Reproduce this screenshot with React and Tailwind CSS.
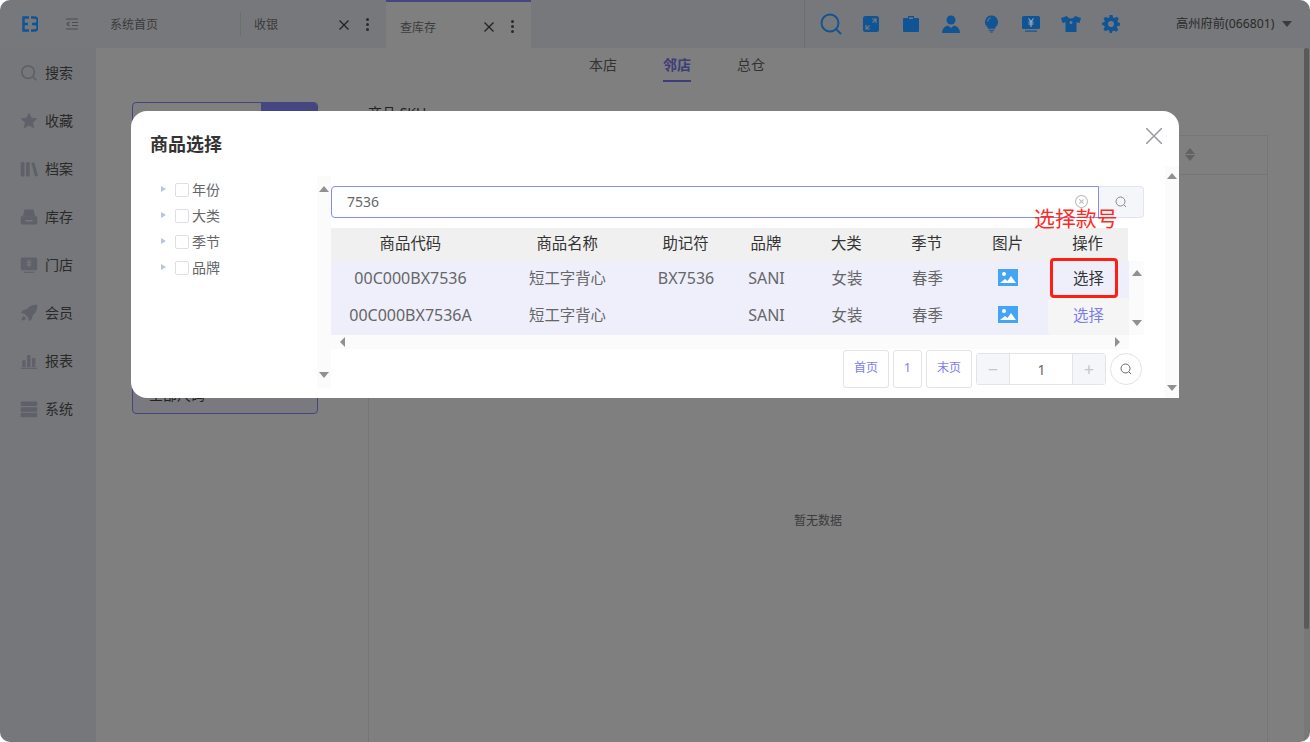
function Si({ children, vb = "0 0 24 24", c = "w-[18px] h-[18px]" }) {
  return <svg viewBox={vb} className={c} fill="currentColor">{children}</svg>;
}
const sideIcons = [
  <svg viewBox="0 0 20 20" className="w-[18px] h-[18px]" fill="none" stroke="currentColor" strokeWidth="2"><circle cx="9" cy="9" r="7" /><path d="M14 14l4 4" /></svg>,
  <Si><path d="M12 .5l3.400 7.200 7.800 1-5.700 5.400 1.500 7.900L12 18l-7 4 1.500-7.900L.800 8.700l7.800-1z" /></Si>,
  <Si><rect x="1" y="3" width="5" height="19" rx="1" /><rect x="8" y="3" width="5" height="19" rx="1" /><path d="M15 4l4-1 5 18-4 1z" /></Si>,
  <Si><path d="M6 2h12l2 9H4z" /><path fillRule="evenodd" d="M2 11h20a1 1 0 011 1v8a2 2 0 01-2 2H3a2 2 0 01-2-2v-8a1 1 0 011-1zm5 5v2h10v-2z" /></Si>,
  <Si><path fillRule="evenodd" d="M3 2h18a2 2 0 012 2v13a2 2 0 01-2 2H3a2 2 0 01-2-2V4a2 2 0 012-2zm6 3l2 3H9v1.500h2.300V11H9v1.500h2.300V15h1.400v-2.500H15V11h-2.300V9.500H15V8h-2l2-3h-1.500L12 7.500 10.500 5z" /><rect x="5" y="21" width="14" height="1.500" /></Si>,
  <Si><path d="M23 1c-6-.5-10.500 1.500-14 6L4 8l-3 4 5 1 5 5 1 5 4-3 1-5c4.500-3.500 6.500-8 6-14z" /><path d="M5 16c-2 1-3 3.500-3 6 2.500 0 5-1 6-3z" /></Si>,
  <Si><rect x="3" y="11" width="4.500" height="9" /><rect x="9.500" y="4" width="4.500" height="16" /><rect x="16" y="8" width="4.500" height="12" /><rect x="1" y="21" width="22" height="1.500" /></Si>,
  <Si><rect x="1" y="2" width="22" height="6" rx="1" /><rect x="1" y="9.500" width="22" height="6" rx="1" /><rect x="1" y="17" width="22" height="6" rx="1" /></Si>,
];
const sideLabels = ["搜索", "收藏", "档案", "库存", "门店", "会员", "报表", "系统"];
const topIcons = [
  <svg viewBox="0 0 22 22" className="w-[22px] h-[22px]" fill="none" stroke="currentColor" strokeWidth="1.900"><circle cx="10" cy="10" r="8.500" /><path d="M16 16l5 5" /></svg>,
  <svg viewBox="0 0 16 16" className="w-[16px] h-[16px]"><rect width="16" height="16" rx="2.500" fill="currentColor" /><path d="M9 3h4v4M13 3L9.500 6.500M7 13H3V9M3 13l3.500-3.500" fill="none" stroke="#77787b" strokeWidth="1.200" /></svg>,
  <svg viewBox="0 0 16 16" className="w-[16px] h-[16px]" fill="currentColor"><path fillRule="evenodd" d="M5 0h6v2h4a1 1 0 011 1v12a1 1 0 01-1 1H1a1 1 0 01-1-1V3a1 1 0 011-1h4zm1 1.500v1.500h4V1.500z" /></svg>,
  <svg viewBox="0 0 18 18" className="w-[18px] h-[18px]" fill="currentColor"><circle cx="9" cy="5" r="4.500" /><path d="M0 18c.3-4 2-6.500 6-7.500L9 13l3-2.500c4 1 5.700 3.500 6 7.500z" /></svg>,
  <svg viewBox="0 0 16 18" className="w-[15px] h-[18px]" fill="currentColor"><path fillRule="evenodd" d="M8 0a7 7 0 014 12.700V14H4v-1.300A7 7 0 018 0zM4.500 6.500A3.500 3.500 0 017.500 3V2A4.500 4.500 0 003.500 6.500z" /><path d="M5 15h6v1.200H5zM6.500 17h3v1h-3z" /></svg>,
  <svg viewBox="0 0 18 16" className="w-[18px] h-[16px]"><rect width="18" height="13" rx="1.500" fill="currentColor" /><rect x="3" y="14.500" width="12" height="1.200" fill="currentColor" /><path d="M6.500 2.500L9 5.500l2.500-3M6.500 6h5M6.500 8h5M9 5.500V11" fill="none" stroke="#a8adb8" strokeWidth="1.100" /></svg>,
  <svg viewBox="0 0 20 16" className="w-[20px] h-[16px]" fill="currentColor"><path fillRule="evenodd" d="M6 0c.5 1.600 2 2.500 4 2.500S13.500 1.600 14 0l6 2-1.500 5-3-.8V16h-11V6.200l-3 .8L0 2zM10 5a1.500 1.500 0 100 3 1.500 1.500 0 000-3z" /></svg>,
  <svg viewBox="0 0 24 24" className="w-[18px] h-[18px]" fill="currentColor"><path fillRule="evenodd" d="M10 0h4l.7 3.300 2 .8L19.600 2.300l2.800 2.800-1.800 2.900.8 2L24 10.700v3.300l-3.300.7-.8 2 1.800 2.900-2.800 2.800-2.900-1.800-2 .8L13.300 24h-3l-.7-3.300-2-.8-2.900 1.800-2.800-2.800 1.800-2.900-.8-2L0 13.300v-3l3-.6.800-2L2 5.100l2.800-2.800 2.900 1.800 2-.8zM12 8a4 4 0 100 8 4 4 0 000-8z" /></svg>,
];
function Arrow({ d, c = "" }) {
  const m = { u: "border-x-[5px] border-x-transparent border-b-[6px] border-b-[#909090]", n: "border-x-[5px] border-x-transparent border-t-[6px] border-t-[#909090]", l: "border-y-[5px] border-y-transparent border-r-[5px] border-r-[#909090]", r: "border-y-[5px] border-y-transparent border-l-[5px] border-l-[#909090]" };
  return <span className={`block w-0 h-0 ${m[d]} ${c}`} />;
}
function Lens({ c = "w-[12px] h-[12px] text-[#888]" }) {
  return <svg viewBox="0 0 12 12" className={c} fill="none" stroke="currentColor" strokeWidth="1"><circle cx="5.500" cy="5.500" r="4.500" /><path d="M9 9l2 2" /></svg>;
}
function Pic() {
  return <svg viewBox="0 0 20 17" className="w-[20px] h-[17px] block"><rect width="20" height="17" fill="#45a5f5" /><circle cx="6" cy="5" r="2" fill="#fff" /><path d="M2 14l5-4 2.500 2L13 7l5 7z" fill="#fff" /></svg>;
}
function X() {
  return <svg viewBox="0 0 10 10" className="w-[10px] h-[10px] block" fill="none" stroke="#444" strokeWidth="1.300"><path d="M.5.500l9 9M9.500.500l-9 9" /></svg>;
}
function Dots() {
  return <span className="flex flex-col gap-[2px]"><i className="block w-[3px] h-[3px] rounded-full bg-[#555]" /><i className="block w-[3px] h-[3px] rounded-full bg-[#555]" /><i className="block w-[3px] h-[3px] rounded-full bg-[#555]" /></span>;
}
const cols = ["w-[157px]", "w-[157px]", "w-[80px]", "w-[81px]", "w-[80px]", "w-[81px]", "w-[81px]", "w-[81px]"];
const heads = ["商品代码", "商品名称", "助记符", "品牌", "大类", "季节", "图片", "操作"];
const rows = [
  ["00C000BX7536", "短工字背心", "BX7536", "SANI", "女装", "春季"],
  ["00C000BX7536A", "短工字背心", "", "SANI", "女装", "春季"],
];
function PageBtn({ children, w }) {
  return <div className={`${w} h-[38px] border border-[#e3e3e8] rounded-[3px] flex items-center justify-center pb-[2px] text-[12px] text-[#7b7bf0]`}>{children}</div>;
}
export default function App() {
  return (
    <div className="w-[1310px] h-[742px] bg-white">
      <div className="relative w-full h-full overflow-hidden rounded-[10px] bg-white text-[12px] font-['Noto_Sans','Noto_Sans_CJK_SC',sans-serif]">
        {/* header */}
        <div className="h-[48px] bg-[#eef0f6] flex items-stretch">
          <div className="w-[66px] flex items-center pl-[22px]">
            <svg viewBox="0 0 16 16" className="relative z-10 w-[16px] h-[16px]" fill="none" stroke="#0f5494" strokeWidth="2.500"><path d="M7 1.500H1.500v13H7M1.500 8H6" /><path d="M9 1.500h3.500a2.500 2.500 0 010 6.500H10m2.500 0a3.200 3.200 0 010 6.500H9" /></svg>
          </div>
          <div className="w-[44px] flex items-center">
            <svg viewBox="0 0 12 12" className="w-[12px] h-[12px]" fill="none" stroke="#999" strokeWidth="1.100"><path d="M0 1h12M6 4.500h6M6 7.500h6M0 11h12" /><path d="M3.500 4L1 6l2.500 2" /></svg>
          </div>
          <div className="w-[130px] flex items-center pt-[2px] text-[#777]">系统首页</div>
          <div className="w-[146px] flex items-center border-l border-[#dcdde2] my-[12px] pl-[13px] pt-[1px] text-[#777]">
            <span className="w-[85px]">收银</span>
            <span className="w-[27px]"><X /></span>
            <Dots />
          </div>
          <div className="w-[145px] bg-white border-t-2 border-[#8a8aff] flex items-center pl-[14px] pt-[3px] text-[#777]">
            <span className="w-[84px] pt-[2px]">查库存</span>
            <span className="w-[27px]"><X /></span>
            <Dots />
          </div>
          <div className="w-[273px]" />
          <div className="w-[506px] border-l border-[#dcdde2] flex items-center text-[#0f5494]">
            {topIcons.map((ic, i) => <div key={i} className="relative z-10 w-[40px] shrink-0 flex justify-center first:ml-[6px]">{ic}</div>)}
            <div className="ml-[45px] text-[12.250px] text-[#555] whitespace-nowrap">高州府前(066801)</div>
            <span className="ml-[8px] w-0 h-0 border-x-[5px] border-x-transparent border-t-[6px] border-t-[#777]" />
          </div>
        </div>
        {/* page */}
        <div className="flex h-[694px]">
          <div className="w-[96px] bg-[#eceef4] pt-px">
            {sideLabels.map((l, i) => (
              <div key={l} className="h-[48px] flex items-center pl-[20px] text-[#bcc2d2]">
                <span className="w-[25px]">{sideIcons[i]}</span>
                <span className="text-[14px] text-[#555] pb-[2px]">{l}</span>
              </div>
            ))}
          </div>
          <div className="flex-1 bg-white flex flex-col">
            <div className="h-[34px] flex items-start justify-center gap-[46px] pt-[6px] pr-[46px] text-[14px] text-[#666]">
              <span className="h-[28px] leading-[22px]">本店</span>
              <span className="h-[28px] leading-[22px] font-bold text-[#7b7bf0] border-b-2 border-[#7b7bf0]">邻店</span>
              <span className="h-[28px] leading-[22px]">总仓</span>
            </div>
            <div className="flex flex-1 pl-[36px] pt-[20px]">
              <div className="w-[186px]">
                <div className="h-[36px] border border-[#8a8aff] rounded-[4px] flex justify-end overflow-hidden"><div className="w-[56px] bg-[#8a8aff]" /></div>
                <div className="mt-[242px] h-[34px] border border-[#8a8aff] rounded-[4px] bg-[#f2f2ff] flex items-center pl-[16px] pb-[6px] text-[14px] text-[#444]">全部尺码</div>
              </div>
              <div className="ml-[50px] w-[900px] flex flex-col">
                <div className="h-[33px] text-[14px] text-[#444] leading-[22px]">商品 SKU</div>
                <div className="flex-1 border-x border-t border-[#ededed] flex flex-col">
                  <div className="h-[39px] border-b border-[#ededed] flex items-center justify-end pr-[72px] pb-[2px]">
                    <span className="flex flex-col gap-[1px]">
                      <span className="block w-0 h-0 border-x-[5px] border-x-transparent border-b-[6px] border-b-[#c4c4c4]" />
                      <span className="block w-0 h-0 border-x-[5px] border-x-transparent border-t-[6px] border-t-[#c4c4c4]" />
                    </span>
                  </div>
                  <div className="flex-1 flex items-center justify-center text-[#777] pt-[124px]">暂无数据</div>
                </div>
              </div>
            </div>
          </div>
          <div className="w-[6px] bg-[#f0f0f0]">
            <div className="w-[5px] h-[581px] bg-[#b4b4b4] rounded-[3px]" />
          </div>
        </div>
        {/* mask */}
        <div className="absolute inset-0 bg-black/50" />
        {/* modal */}
        <div className="absolute left-[131px] top-[111px] w-[1048px] h-[287px] bg-white rounded-[16px] rounded-br-none overflow-hidden flex">
          <div className="w-[1034px] flex flex-col">
            <div className="h-[65px] pl-[19px] pt-[20px] text-[18px] leading-[26px] font-bold text-[#333]">商品选择</div>
            <div className="flex">
              <div className="w-[186px] pl-[30px] pt-[1px]">
                {["年份", "大类", "季节", "品牌"].map((t) => (
                  <div key={t} className="h-[26px] flex items-center text-[14px] text-[#666]">
                    <span className="w-0 h-0 border-y-[3.500px] border-y-transparent border-l-[5px] border-l-[#b9c5da] mr-[9px] -mt-[3px]" />
                    <span className="w-[14px] h-[14px] border border-[#dcdfe6] rounded-[2px] mr-[3px]" />
                    <span className="pb-[2px]">{t}</span>
                  </div>
                ))}
              </div>
              <div className="w-[14px] h-[212px] bg-[#fbfbfb] flex flex-col items-center justify-between py-[10px]"><Arrow d="u" /><Arrow d="n" /></div>
              <div className="w-[813px]">
                <div className="mt-[10px] flex h-[32px]">
                  <div className="w-[768px] border border-[#8a8aff] rounded-l-[4px] flex items-center justify-between pl-[15px] pr-[10px] pb-[2px] text-[14px] text-[#666]">
                    <span>7536</span>
                    <svg viewBox="0 0 12 12" className="w-[13px] h-[13px]" fill="none" stroke="#bbb" strokeWidth="1"><circle cx="6" cy="6" r="5.500" /><path d="M4 4l4 4M8 4l-4 4" /></svg>
                  </div>
                  <div className="w-[45px] bg-[#f5f6fa] border border-l-0 border-[#e3e5ee] rounded-r-[4px] flex items-center justify-center"><Lens /></div>
                </div>
                <div className="mt-[10px] w-[797px] h-[33px] bg-[#f0f0f0] flex text-[15.400px] text-[#333]">
                  {heads.map((h, i) => <div key={h} className={`${cols[i]} flex items-center justify-center pb-[1px] ${i < 7 ? "pl-[2px]" : ""}`}>{h}</div>)}
                </div>
                <div className="flex">
                  <div className="w-[798px]">
                    {rows.map((r, ri) => (
                      <div key={ri} className="h-[37px] bg-[#efeffc] flex text-[15.400px] text-[#666]">
                        {r.map((v, i) => <div key={i} className={`${cols[i]} flex items-center justify-center pl-[2px] ${/^[0-9A-Z]+$/.test(v) ? "text-[16px] pb-[3px]" : "pb-[2px]"}`}>{v}</div>)}
                        <div className={`${cols[6]} flex items-center justify-center pb-[4px]`}><Pic /></div>
                        {ri === 0
                          ? <div className={`${cols[7]} flex items-center justify-center pb-[2px] text-[#333]`}>选择</div>
                          : <div className={`${cols[7]} flex items-center justify-center pb-[2px] bg-[#f5f5f5] rounded-[4px] text-[#7b7bf0]`}>选择</div>}
                      </div>
                    ))}
                  </div>
                  <div className="w-[15px] bg-[#fbfbfb] flex flex-col items-center justify-between py-[9px]"><Arrow d="u" /><Arrow d="n" /></div>
                </div>
                <div className="h-[14px] bg-[#fbfbfb] flex items-center justify-between px-[9px] w-[798px]"><Arrow d="l" /><Arrow d="r" /></div>
                <div className="mt-px h-[38px] flex items-center justify-end gap-[4px] pr-[2px]">
                  <PageBtn w="w-[46px]">首页</PageBtn>
                  <PageBtn w="w-[29px]">1</PageBtn>
                  <PageBtn w="w-[46px]">末页</PageBtn>
                  <div className="w-[130px] h-[32px] border border-[#e3e3e8] rounded-[3px] flex">
                    <div className="w-[33px] bg-[#f5f6fa] border-r border-[#e3e3e8] flex items-center justify-center text-[#c4c6cf] text-[18px]">−</div>
                    <div className="flex-1 flex items-center justify-center pt-[1px] pl-[1px] text-[14px] text-[#666]">1</div>
                    <div className="w-[33px] bg-[#f5f6fa] border-l border-[#e3e3e8] flex items-center justify-center text-[#c4c6cf] text-[18px]">+</div>
                  </div>
                  <div className="w-[32px] h-[32px] border border-[#e3e3e8] rounded-full flex items-center justify-center"><Lens c="w-[12px] h-[12px] text-[#666]" /></div>
                </div>
              </div>
            </div>
          </div>
          <div className="w-[14px] mt-[55px] bg-[#fbfbfb] flex flex-col items-center justify-between py-[7px]"><Arrow d="u" /><Arrow d="n" /></div>
          <svg viewBox="0 0 16 16" className="absolute right-[17px] top-[17px] w-[16px] h-[16px]" fill="none" stroke="#999aa0" strokeWidth="1.500"><path d="M0 0l16 16M16 0L0 16" /></svg>
        </div>
        {/* annotations */}
        <div className="absolute left-[1050px] top-[258px] w-[68px] h-[40px] border-[3px] border-[#ff1f12] rounded-[4px]" />
        <div className="absolute left-[1034px] top-[204px] text-[20.900px] leading-[28px] text-[#ff2a1f] whitespace-nowrap">选择款号</div>
      </div>
    </div>
  );
}
